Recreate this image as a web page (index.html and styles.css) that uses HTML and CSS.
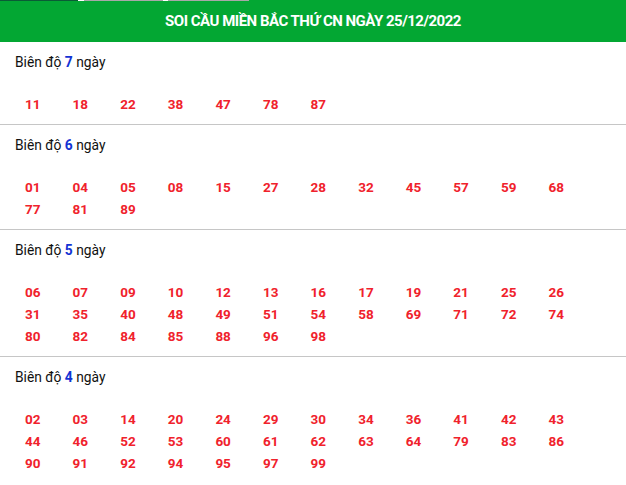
FILE: index.html
```html
<!DOCTYPE html>
<html lang="vi">
<head>
<meta charset="utf-8">
<link rel="stylesheet" href="styles.css">
</head>
<body>
<div class="page">
  <div class="tabs">
    <span class="tab tab-active"></span>
    <span class="tab tab-gray"></span>
    <span class="tab tab-gray tab-wide"></span>
  </div>
  <div class="header">SOI CẦU MIỀN BẮC THỨ CN NGÀY 25/12/2022</div>

  <section class="block">
    <div class="label">Biên độ <b>7</b> ngày</div>
    <div class="nums">
      <span>11</span><span>18</span><span>22</span><span>38</span><span>47</span><span>78</span><span>87</span>
    </div>
  </section>

  <section class="block">
    <div class="label">Biên độ <b>6</b> ngày</div>
    <div class="nums">
      <span>01</span><span>04</span><span>05</span><span>08</span><span>15</span><span>27</span><span>28</span><span>32</span><span>45</span><span>57</span><span>59</span><span>68</span>
      <span>77</span><span>81</span><span>89</span>
    </div>
  </section>

  <section class="block">
    <div class="label">Biên độ <b>5</b> ngày</div>
    <div class="nums">
      <span>06</span><span>07</span><span>09</span><span>10</span><span>12</span><span>13</span><span>16</span><span>17</span><span>19</span><span>21</span><span>25</span><span>26</span>
      <span>31</span><span>35</span><span>40</span><span>48</span><span>49</span><span>51</span><span>54</span><span>58</span><span>69</span><span>71</span><span>72</span><span>74</span>
      <span>80</span><span>82</span><span>84</span><span>85</span><span>88</span><span>96</span><span>98</span>
    </div>
  </section>

  <section class="block last">
    <div class="label">Biên độ <b>4</b> ngày</div>
    <div class="nums">
      <span>02</span><span>03</span><span>14</span><span>20</span><span>24</span><span>29</span><span>30</span><span>34</span><span>36</span><span>41</span><span>42</span><span>43</span>
      <span>44</span><span>46</span><span>52</span><span>53</span><span>60</span><span>61</span><span>62</span><span>63</span><span>64</span><span>79</span><span>83</span><span>86</span>
      <span>90</span><span>91</span><span>92</span><span>94</span><span>95</span><span>97</span><span>99</span>
    </div>
  </section>
</div>
</body>
</html>
```

FILE: styles.css
```css
html, body {
  margin: 0;
  padding: 0;
  background: #ffffff;
}
body {
  font-family: Roboto, "Liberation Sans", Arial, sans-serif;
  color: #111;
}
.page {
  position: relative;
  width: 626px;
}
.tabs {
  position: absolute;
  top: 0;
  left: 0;
  display: flex;
  height: 1px;
  background: #fff;
}
.tab {
  display: block;
  height: 1px;
  width: 79px;
  margin-right: 5px;
}
.tab-active { background: #0a5c36; width: 78px; margin-right: 6px; }
.tab-gray { background: #a8a8a8; }
.tab-wide { width: 81px; margin-right: 0; }
.header {
  height: 42px;
  background: #03a733;
  color: #fff;
  font-weight: 700;
  font-size: 15px;
  line-height: 42px;
  text-align: center;
  letter-spacing: -0.5px;
}
.block {
  border-bottom: 1px solid #c6c6c6;
  padding: 12px 0 9.5px;
}
.block.last {
  border-bottom: none;
}
.label {
  font-size: 13.8px;
  line-height: 16px;
  padding-left: 15px;
  color: #111;
}
.label b {
  color: #1233d4;
  font-weight: 700;
}
.nums {
  display: grid;
  grid-template-columns: repeat(12, 47.6px);
  padding-left: 25px;
  margin-top: 22.5px;
}
.nums span {
  font-size: 13.5px;
  font-weight: 700;
  line-height: 22px;
  color: #f0222c;
}
```
